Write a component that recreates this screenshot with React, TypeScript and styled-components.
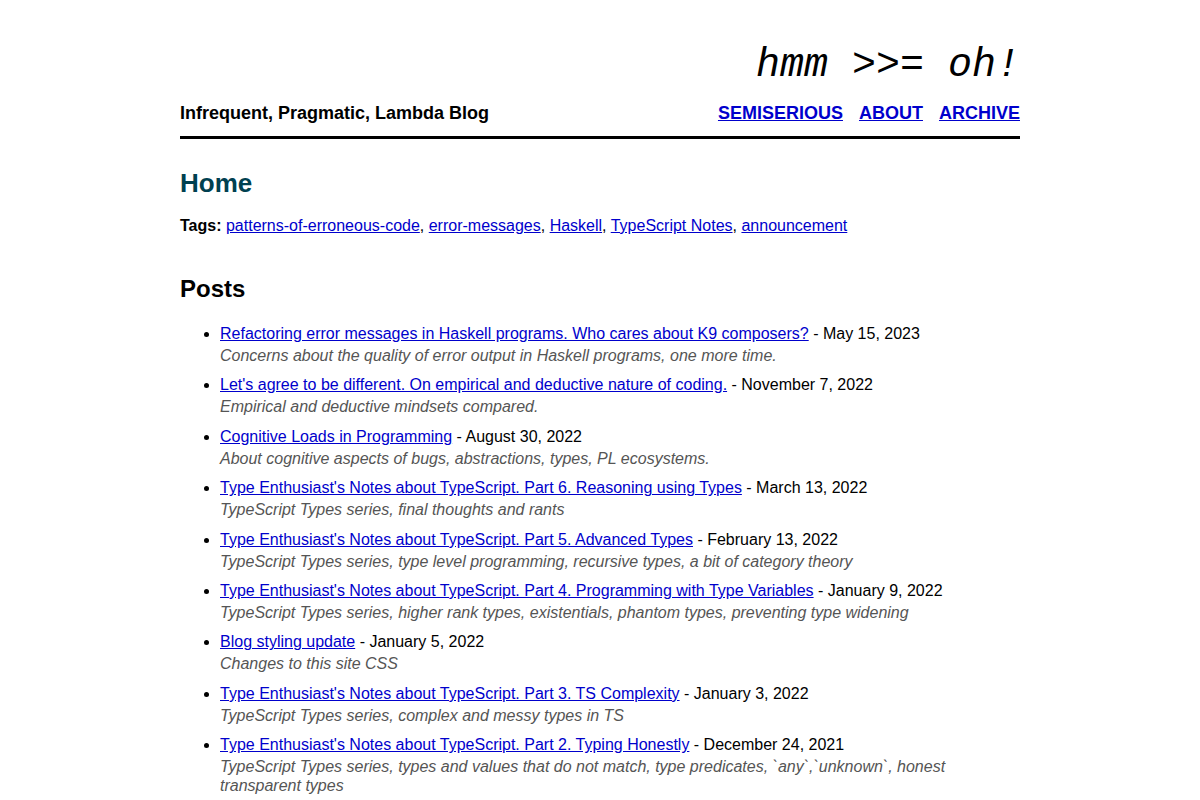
import React from "react";
import styled, { createGlobalStyle } from "styled-components";

const Global = createGlobalStyle`
  html, body { margin: 0; padding: 0; background: #fff; }
  body { font-family: "Liberation Sans", Arial, sans-serif; font-size: 16px; color: #000; }
  a { color: #0000cc; }
`;

const Page = styled.div`
  width: 840px;
  margin: 0 auto;
  padding-top: 38px;
`;

const Header = styled.header`
  border-bottom: 3px solid #000;
  padding-bottom: 12px;
`;

const Logo = styled.div`
  text-align: right;
  font-family: "Liberation Mono", "Courier New", monospace;
  font-style: italic;
  font-size: 40px;
  line-height: 56px;
`;

const HeaderRow = styled.div`
  display: flex;
  justify-content: space-between;
  align-items: baseline;
  margin-top: 9px;
`;

const BlogName = styled.div`
  font-weight: bold;
  font-size: 18px;
`;

const Nav = styled.nav`
  display: flex;
  gap: 16px;
  font-weight: bold;
  font-size: 18px;
  text-transform: uppercase;
`;

const Main = styled.main`
  padding-top: 17px;
`;

const Title = styled.h1`
  color: #004050;
  font-size: 26px;
  margin: 12px 0 16px;
`;

const Tags = styled.div`
  line-height: 22px;
`;

const SectionTitle = styled.h2`
  font-size: 24px;
  margin: 38px 0 22px;
`;

const List = styled.ul`
  margin: 0;
  padding-left: 40px;
`;

const Item = styled.li`
  margin-bottom: 11px;
  line-height: 18.4px;
`;

const Desc = styled.div`
  margin-top: 3.6px;
  font-style: italic;
  color: #555;
`;

const posts = [
  ["Refactoring error messages in Haskell programs. Who cares about K9 composers?", "May 15, 2023", "Concerns about the quality of error output in Haskell programs, one more time."],
  ["Let's agree to be different. On empirical and deductive nature of coding.", "November 7, 2022", "Empirical and deductive mindsets compared."],
  ["Cognitive Loads in Programming", "August 30, 2022", "About cognitive aspects of bugs, abstractions, types, PL ecosystems."],
  ["Type Enthusiast's Notes about TypeScript. Part 6. Reasoning using Types", "March 13, 2022", "TypeScript Types series, final thoughts and rants"],
  ["Type Enthusiast's Notes about TypeScript. Part 5. Advanced Types", "February 13, 2022", "TypeScript Types series, type level programming, recursive types, a bit of category theory"],
  ["Type Enthusiast's Notes about TypeScript. Part 4. Programming with Type Variables", "January 9, 2022", "TypeScript Types series, higher rank types, existentials, phantom types, preventing type widening"],
  ["Blog styling update", "January 5, 2022", "Changes to this site CSS"],
  ["Type Enthusiast's Notes about TypeScript. Part 3. TS Complexity", "January 3, 2022", "TypeScript Types series, complex and messy types in TS"],
  ["Type Enthusiast's Notes about TypeScript. Part 2. Typing Honestly", "December 24, 2021", "TypeScript Types series, types and values that do not match, type predicates, `any`,`unknown`, honest transparent types"],
];

const tags = ["patterns-of-erroneous-code", "error-messages", "Haskell", "TypeScript Notes", "announcement"];

export default function App() {
  return (
    <>
      <Global />
      <Page>
        <Header>
          <Logo>hmm &gt;&gt;= oh!</Logo>
          <HeaderRow>
            <BlogName>Infrequent, Pragmatic, Lambda Blog</BlogName>
            <Nav>
              <a href="#">Semiserious</a>
              <a href="#">About</a>
              <a href="#">Archive</a>
            </Nav>
          </HeaderRow>
        </Header>
        <Main>
          <Title>Home</Title>
          <Tags>
            <b>Tags:</b>{" "}
            {tags.map((t, i) => (
              <React.Fragment key={t}>
                <a href="#">{t}</a>
                {i < tags.length - 1 ? ", " : ""}
              </React.Fragment>
            ))}
          </Tags>
          <SectionTitle>Posts</SectionTitle>
          <List>
            {posts.map(([t, d, s]) => (
              <Item key={t}>
                <a href="#">{t}</a> - {d}
                <Desc>{s}</Desc>
              </Item>
            ))}
          </List>
        </Main>
      </Page>
    </>
  );
}
